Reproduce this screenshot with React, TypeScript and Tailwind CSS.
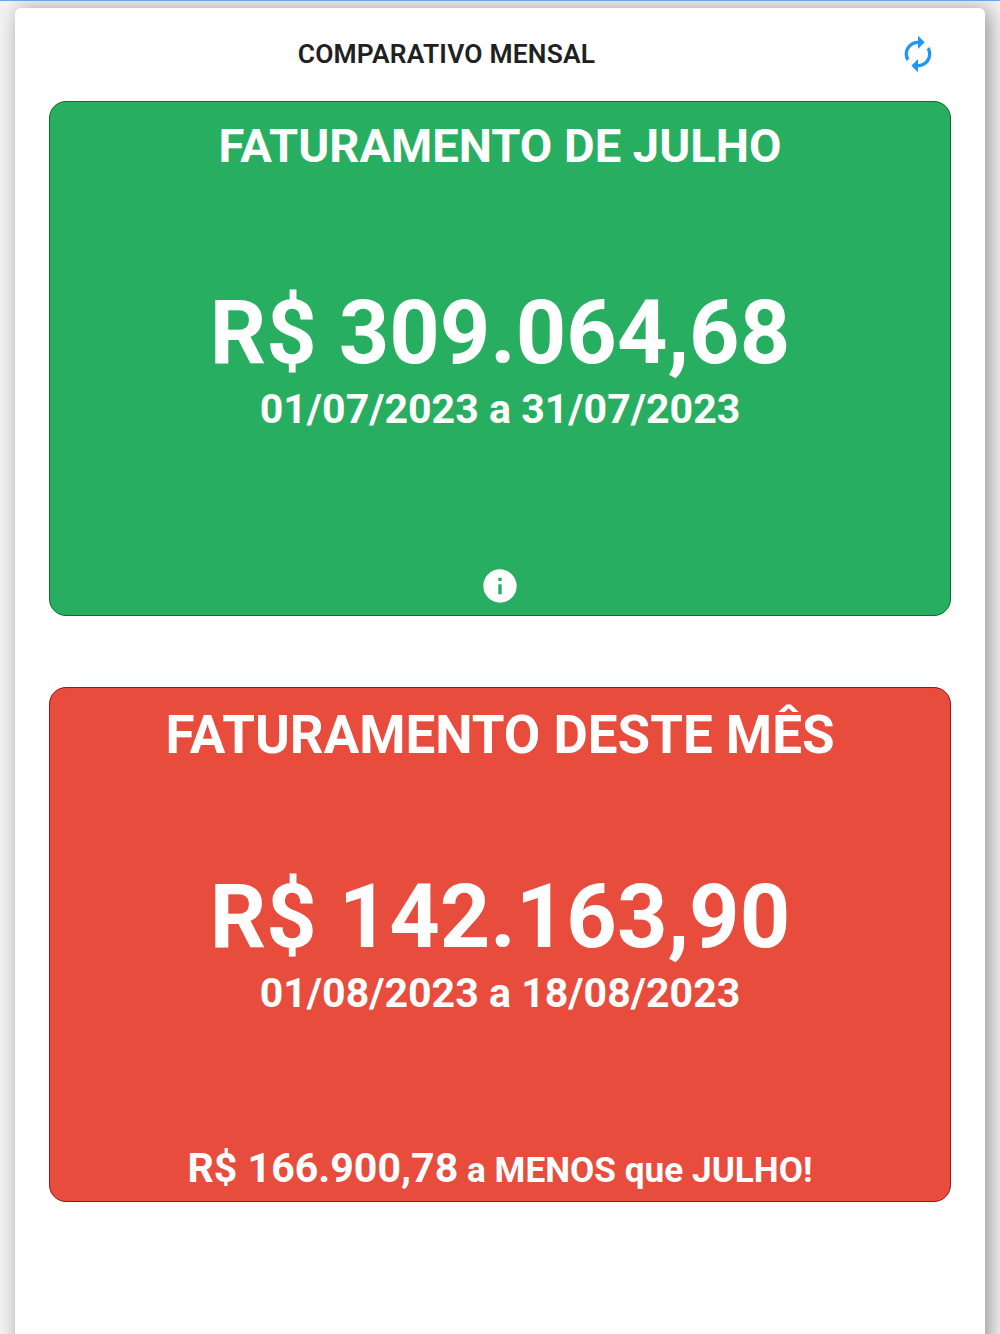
import clsx from 'clsx';
import { MdAutorenew, MdInfo } from 'react-icons/md';

interface RevenueCardProps {
  className: string;
  title: React.ReactNode;
  amount: string;
  period: string;
  footer: React.ReactNode;
}

function RevenueCard({ className, title, amount, period, footer }: RevenueCardProps) {
  return (
    <section
      className={clsx(
        'flex h-[515px] flex-col items-center rounded-[17px] border text-center font-bold whitespace-nowrap text-white',
        className,
      )}
    >
      {title}
      <div className="flex flex-1 flex-col items-center">
        <p className="mt-[102px] text-[88.1px] leading-[104px]">{amount}</p>
        <p className="text-[41.1px] leading-[49px]">{period}</p>
      </div>
      {footer}
    </section>
  );
}

export default function App() {
  return (
    <div className="h-[1334px] overflow-hidden border-t border-[#6aa3ea] bg-[#f2f2f2] px-[15px] pt-[7px] font-[Roboto,sans-serif]">
      <main className="h-[1400px] rounded-[6px] bg-white px-[34px] shadow-[4px_2px_20px_rgba(0,0,0,0.4)]">
        <header className="flex h-[93px] items-center">
          <h1 className="flex-1 pr-[54px] text-center text-[26.4px] font-semibold tracking-[0.0075em] text-[#212121]">
            COMPARATIVO MENSAL
          </h1>
          <button className="mr-[13px] mb-[2px]" aria-label="Atualizar">
            <MdAutorenew className="size-10 text-[#2196f3]" />
          </button>
        </header>

        <RevenueCard
          className="border-[#0f6b2c] bg-[#28ae60]"
          title={<h2 className="mt-[16px] mb-[5px] text-[47.1px] leading-[56px]">FATURAMENTO DE JULHO</h2>}
          amount="R$ 309.064,68"
          period="01/07/2023 a 31/07/2023"
          footer={<MdInfo className="mb-[9px] size-10" />}
        />

        <RevenueCard
          className="mt-[71px] border-[#a31212] bg-[#e84c3d]"
          title={<h2 className="mt-[17px] -mb-[2px] text-[52.9px] leading-[60px]">FATURAMENTO DESTE MÊS</h2>}
          amount="R$ 142.163,90"
          period="01/08/2023 a 18/08/2023"
          footer={
            <p className="mb-[6px] text-[35.2px] leading-[49px]">
              <span className="text-[41.1px]">R$ 166.900,78</span> a MENOS que JULHO!
            </p>
          }
        />
      </main>
    </div>
  );
}
